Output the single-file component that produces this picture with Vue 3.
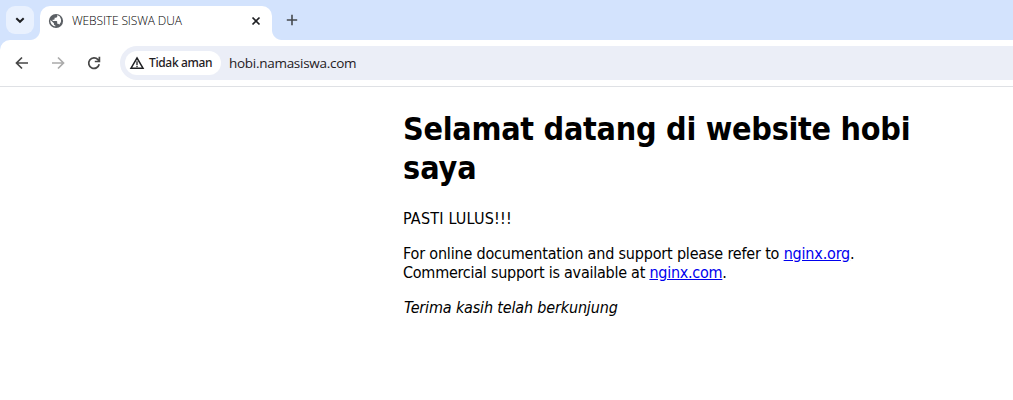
<script setup>
</script>

<template>
  <div class="browser">
    <header class="tabs">
      <button class="search" aria-label="Search tabs">
        <svg width="28" height="28" viewBox="0 0 28 28"><path d="M10.3 12.2 14 15.8 17.7 12.2" fill="none" stroke="#1f2023" stroke-width="2" /></svg>
      </button>
      <div class="tab">
        <svg class="globe" width="16" height="16" viewBox="0 0 16 16">
          <circle cx="8" cy="8" r="7.1" fill="#5b5f64" />
          <path d="M9.3 2.1v1.2c0 .8-.6 1.4-1.4 1.4H6.6v1.4c0 .4-.3.7-.7.7H4.6v1.3h3.9c.4 0 .7.3.7.7v2h.7c.6 0 1.1.4 1.3 1A5.7 5.7 0 0 0 9.3 2.1zM2.4 7A5.7 5.7 0 0 0 7.3 13.6v-1.3c-.8 0-1.4-.6-1.4-1.4v-.7L2.4 7z" fill="#fff" />
        </svg>
        <span class="title">WEBSITE SISWA DUA</span>
        <svg class="close" width="10" height="10" viewBox="0 0 10 10"><path d="M1.5 1.5 8.5 8.5M8.5 1.5 1.5 8.5" stroke="#1f2023" stroke-width="1.7" /></svg>
      </div>
      <svg class="plus" width="12" height="12" viewBox="0 0 12 12"><path d="M6 .8V11.2M.8 6H11.2" stroke="#45494e" stroke-width="1.6" /></svg>
    </header>
    <nav class="toolbar">
      <svg width="16" height="16" viewBox="0 0 16 16" fill="none" stroke="#474747" stroke-width="1.7"><path d="M14 8H3M8 2.5 2.5 8 8 13.5" /></svg>
      <svg width="16" height="16" viewBox="0 0 16 16" fill="none" stroke="#ababab" stroke-width="1.7"><path d="M2 8H13M8 2.5 13.5 8 8 13.5" /></svg>
      <svg width="16" height="16" viewBox="0 0 16 16" fill="none" stroke="#474747" stroke-width="1.7"><path d="M13.2 9.3A5.3 5.3 0 1 1 12 4.6L13.4 6M13.4 1.8V6.5H8.8" /></svg>
      <div class="address">
        <div class="chip">
          <svg width="16" height="14" viewBox="0 0 16 14"><path d="M8 2 14 12.2H2z" fill="none" stroke="#1f2023" stroke-width="1.5" /><path d="M8 5.3V9M8 9.8V11.2" stroke="#1f2023" stroke-width="1.3" /></svg>
          <span class="warn">Tidak aman</span>
        </div>
        <span class="url">hobi.namasiswa.com</span>
      </div>
    </nav>
    <main class="page">
      <h1><span class="h-a">Selamat datang di website hobi</span><br><span class="h-b">saya</span></h1>
      <p><span class="t-a">PASTI LULUS!!!</span></p>
      <p><span class="t-b">For online documentation and support please refer to <a>nginx.org</a>.</span><br><span class="t-c">Commercial support is available at <a>nginx.com</a>.</span></p>
      <p><em class="t-d">Terima kasih telah berkunjung</em></p>
    </main>
  </div>
</template>

<style>
body { margin: 0; background: #fff; overflow: hidden; }
</style>

<style scoped>
.browser { width: 1013px; height: 400px; overflow: hidden; background: #fff; white-space: nowrap; }
.tabs { box-sizing: border-box; height: 50px; margin-bottom: -10px; padding: 6px 0 0 6px; display: flex; align-items: flex-start; background: #d3e3fd; }
.search { width: 28px; height: 28px; padding: 0; border: 0; border-radius: 9px; background: #e9f1fe; }
.search svg { display: block; }
.tab { position: relative; box-sizing: border-box; width: 232px; height: 34px; margin-left: 6px; padding: 0 11px 5px 8px; display: flex; align-items: center; background: #fff; border-radius: 10px 10px 0 0; }
.tab::before, .tab::after { content: ""; position: absolute; bottom: 0; width: 10px; height: 10px; }
.tab::before { left: -10px; background: radial-gradient(circle at 0 0, transparent 9.5px, #fff 10.5px); }
.tab::after { right: -10px; background: radial-gradient(circle at 100% 0, transparent 9.5px, #fff 10.5px); }
.title { margin-left: 8px; flex: 1; font: 350 12px/16px "Open Sans", sans-serif; color: #000; letter-spacing: -0.13px; }
.plus { margin: 8px 0 0 14px; }
.toolbar { position: relative; box-sizing: border-box; height: 47px; display: flex; align-items: center; padding-left: 14px; gap: 20px; background: #fff; border-bottom: 1px solid #dfe1e5; border-top-left-radius: 10px; }
.address { flex: 1; height: 34px; margin-left: -2px; box-sizing: border-box; padding-left: 5px; display: flex; align-items: center; background: #ebeef7; border-radius: 17px 0 0 17px; }
.chip { box-sizing: border-box; width: 96px; height: 24px; padding-left: 4px; display: flex; align-items: center; gap: 4px; background: #fff; border-radius: 12px; }
.warn { font: 500 12px/16px "Noto Sans", sans-serif; color: #1f2023; letter-spacing: -0.35px; }
.url { margin-left: 8px; font: 13.5px/18px "Open Sans", sans-serif; color: #1f2023; letter-spacing: -0.28px; }
.page { width: 560px; margin-left: 403px; font: 16px/19px "DejaVu Sans Condensed", "Noto Sans", sans-serif; color: #000; }
h1 { margin: 23px 0 21px; font: bold 32px/39px "DejaVu Sans Condensed", "Noto Sans", sans-serif; }
p { margin: 0 0 16px; }
.h-a { letter-spacing: -0.27px; }
.t-a { letter-spacing: 0.2px; }
.t-b { letter-spacing: -0.18px; }
.t-c { letter-spacing: -0.25px; }
.t-d { letter-spacing: -0.16px; margin-left: 1px; }
a { color: #0000ee; text-decoration: underline; }
</style>
